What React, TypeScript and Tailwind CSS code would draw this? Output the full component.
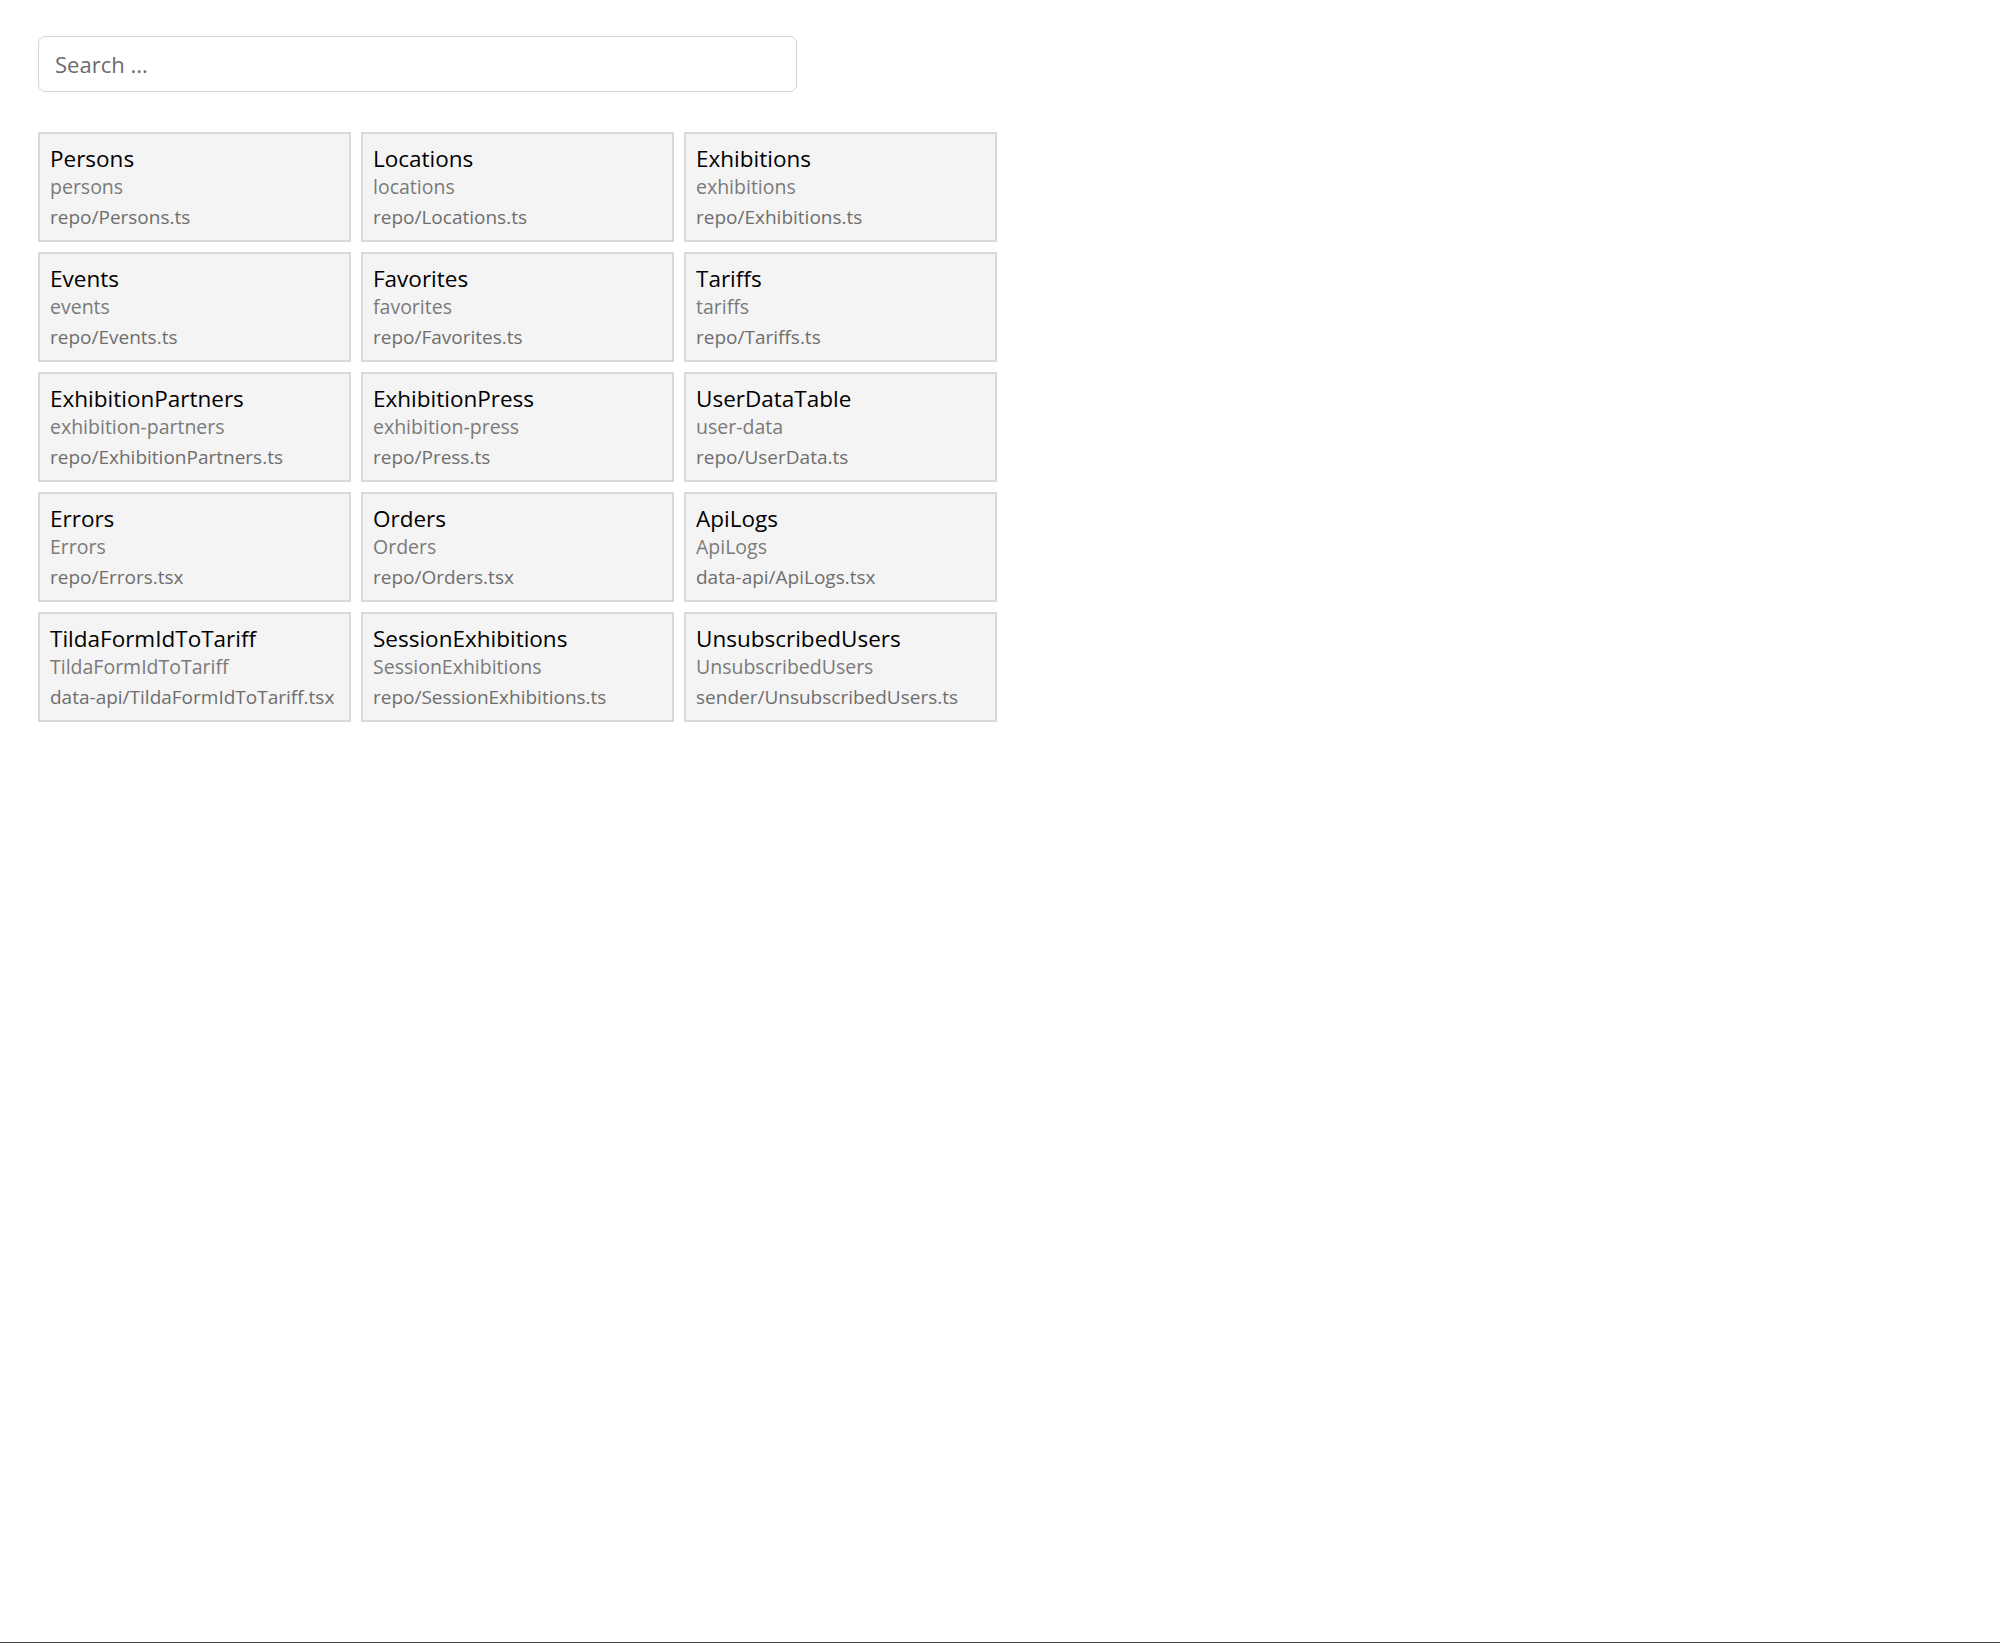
const tables = [
  { title: "Persons", name: "persons", file: "repo/Persons.ts" },
  { title: "Locations", name: "locations", file: "repo/Locations.ts" },
  { title: "Exhibitions", name: "exhibitions", file: "repo/Exhibitions.ts" },
  { title: "Events", name: "events", file: "repo/Events.ts" },
  { title: "Favorites", name: "favorites", file: "repo/Favorites.ts" },
  { title: "Tariffs", name: "tariffs", file: "repo/Tariffs.ts" },
  { title: "ExhibitionPartners", name: "exhibition-partners", file: "repo/ExhibitionPartners.ts" },
  { title: "ExhibitionPress", name: "exhibition-press", file: "repo/Press.ts" },
  { title: "UserDataTable", name: "user-data", file: "repo/UserData.ts" },
  { title: "Errors", name: "Errors", file: "repo/Errors.tsx" },
  { title: "Orders", name: "Orders", file: "repo/Orders.tsx" },
  { title: "ApiLogs", name: "ApiLogs", file: "data-api/ApiLogs.tsx" },
  { title: "TildaFormIdToTariff", name: "TildaFormIdToTariff", file: "data-api/TildaFormIdToTariff.tsx" },
  { title: "SessionExhibitions", name: "SessionExhibitions", file: "repo/SessionExhibitions.ts" },
  { title: "UnsubscribedUsers", name: "UnsubscribedUsers", file: "sender/UnsubscribedUsers.ts" },
]

const TableCard = ({ title, name, file }: { title: string; name: string; file: string }) => {
  return (
    <div className="h-[110px] bg-[#f4f4f4] border-2 border-[#d9d9d9] px-[10px] pt-[11px] overflow-hidden">
      <div className="text-[22.5px] leading-[28px] text-black whitespace-nowrap">{title}</div>
      <div className="text-[19.5px] leading-[24px] mt-[2px] text-[#7a7a7a] whitespace-nowrap">{name}</div>
      <div className="text-[19px] leading-[28px] mt-[4px] text-[#6e6e6e] whitespace-nowrap">{file}</div>
    </div>
  )
}

export default function App() {
  return (
    <div className="min-h-screen bg-white border-b border-[#444] font-['Segoe_UI','Open_Sans',sans-serif]">
      <div className="pl-[38px] pt-[36px]">
        <input
          type="text"
          placeholder="Search ..."
          className="w-[759px] h-[56px] border border-[#d4d4d4] rounded-[7px] px-[16px] text-[22px] text-[#333] placeholder:text-[#6b6b6b] outline-none"
        />

        <div className="mt-[40px] grid grid-cols-[repeat(3,313px)] gap-[10px]">
          {tables.map((t) => (
            <TableCard key={t.title} {...t} />
          ))}
        </div>
      </div>
    </div>
  )
}
